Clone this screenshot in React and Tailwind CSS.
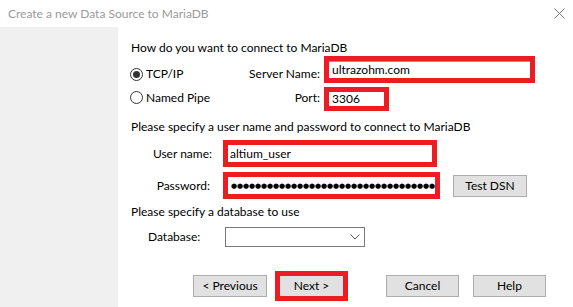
import React from "react";

const font = { fontFamily: "Lato, 'Noto Sans', sans-serif" };

function Radio({ checked, label }) {
  return (
    <div className="flex items-center gap-[3px]">
      <span className="flex h-[13px] w-[13px] items-center justify-center rounded-full border border-[#333333] bg-white">
        {checked ? <span className="h-[7px] w-[7px] rounded-full bg-[#333333]" /> : null}
      </span>
      <span>{label}</span>
    </div>
  );
}

function Button({ children, className = "" }) {
  return (
    <div
      className={`flex h-[22px] items-center justify-center border border-[#adadad] bg-[#e1e1e1] ${className}`}
    >
      {children}
    </div>
  );
}

// red highlight box drawn over the field
function Marked({ className = "", children }) {
  return (
    <div className={`border-[5px] border-[#ed1c24] bg-white ${className}`}>
      {children}
    </div>
  );
}

export default function App() {
  const dots = Array.from({ length: 34 }, (_, i) => i);

  return (
    <div
      className="flex h-[307px] w-[573px] flex-col overflow-hidden bg-white text-[12px] leading-[16px] text-black"
      style={font}
    >
      {/* title bar */}
      <div className="flex h-[27px] shrink-0 items-center justify-between pl-[8px] pr-[7px]">
        <span className="text-[#9a9a9a]">Create a new Data Source to MariaDB</span>
        <svg width="11" height="11" viewBox="0 0 11 11" className="mr-[1px]">
          <path d="M0.5 0.5 L10.5 10.5 M10.5 0.5 L0.5 10.5" stroke="#7a7a7a" strokeWidth="1" />
        </svg>
      </div>

      <div className="flex flex-1">
        <div className="w-[118px] shrink-0 bg-[#f0f0f0]" />

        <div className="flex flex-1 flex-col pl-[13px]">
          <div className="mt-[13px] h-[16px]">How do you want to connect to MariaDB</div>

          {/* connection type */}
          <div className="flex h-[29px] items-start">
            <div className="flex w-[189px] items-center justify-between">
              <div className="ml-[-1px] mt-[10px]">
                <Radio checked label="TCP/IP" />
              </div>
              <span className="mt-[9px]">Server Name:</span>
            </div>
            <Marked className="ml-[4px] h-[27px] w-[211px]">
              <div className="flex h-full items-center border-t border-[#9a9a9a] pl-[3px]">
                ultrazohm.com
              </div>
            </Marked>
          </div>
          <div className="flex h-[26px] items-start">
            <div className="flex w-[189px] items-center justify-between">
              <div className="ml-[-1px] mt-[4px]">
                <Radio label="Named Pipe" />
              </div>
              <span className="mt-[5px]">Port:</span>
            </div>
            <Marked className="ml-[4px] mt-[2px] flex h-[24px] w-[65px] items-center pl-[3px]">
              3306
            </Marked>
          </div>

          <div className="mt-[8px] h-[16px]">
            Please specify a user name and password to connect to MariaDB
          </div>

          {/* credentials */}
          <div className="mt-[5px] flex h-[27px] items-center">
            <span className="w-[81px] text-right">User name:</span>
            <Marked className="ml-[11px] flex h-[27px] w-[214px] items-center pl-[2px]">
              altium_user
            </Marked>
          </div>
          <div className="mt-[5px] flex h-[27px] items-center">
            <span className="w-[79px] text-right">Password:</span>
            <Marked className="ml-[13px] flex h-[27px] w-[217px] shrink-0 items-center pl-[3px]">
              <div
                className="flex text-[7px] leading-[8px]"
                style={{ fontFamily: "'DejaVu Sans', sans-serif" }}
              >
                {dots.map((i) => (
                  <span key={i} className="w-[6px] text-center">●</span>
                ))}
              </div>
            </Marked>
            <Button className="ml-[13px] w-[74px] shrink-0">Test DSN</Button>
          </div>

          <div className="mt-[5px] h-[16px]">Please specify a database to use</div>

          {/* database */}
          <div className="mt-[7px] flex h-[20px] items-center">
            <span className="ml-[17px] w-[77px]">Database:</span>
            <div className="flex h-[20px] w-[140px] items-center justify-end border border-[#7a7a7a] bg-white pr-[4px]">
              <svg width="10" height="6" viewBox="0 0 10 6">
                <path d="M0.5 0.5 L5 5 L9.5 0.5" fill="none" stroke="#555555" strokeWidth="1" />
              </svg>
            </div>
          </div>

          {/* wizard buttons */}
          <div className="mt-[24px] flex h-[30px] items-center">
            <Button className="ml-[62px] w-[74px]">&lt; Previous</Button>
            <div className="ml-[8px] flex h-[30px] w-[73px] items-center justify-center border-[5px] border-[#ed1c24] bg-[#e1e1e1]">
              Next &gt;
            </div>
            <Button className="ml-[38px] w-[73px]">Cancel</Button>
            <Button className="ml-[14px] w-[73px]">Help</Button>
          </div>
        </div>
      </div>
    </div>
  );
}
